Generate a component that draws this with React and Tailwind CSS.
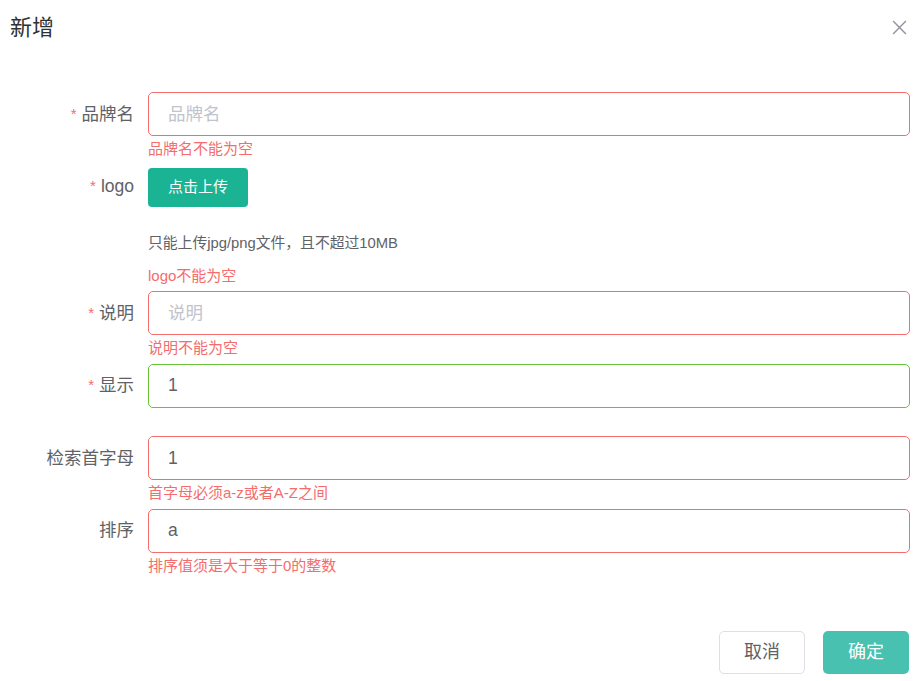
import React from "react";

const FONT = { fontFamily: '"Liberation Sans", "Noto Sans CJK SC", sans-serif' };

function Label({ text, required }) {
  return (
    <div className="w-[148px] shrink-0 pr-[14px] h-[44px] flex items-center justify-end text-[17.5px] text-[#606266]">
      {required && <span className="text-[#f56c6c] mr-[5px] text-[15px]">*</span>}
      <span>{text}</span>
    </div>
  );
}

function Field({ label, required, placeholder, value, error, ok }) {
  return (
    <div className="flex mb-[28.5px]">
      <Label text={label} required={required} />
      <div className="relative flex-1">
        <div
          className={
            "h-[44px] rounded-[5px] border flex items-center pl-[19px] text-[17.5px] " +
            (ok ? "border-[#67c23a]" : "border-[#f56c6c]")
          }
        >
          {value ? (
            <span className="text-[#606266]">{value}</span>
          ) : (
            <span className="text-[#c0c4cc]">{placeholder}</span>
          )}
        </div>
        {error && (
          <div className="absolute left-0 top-[48px] text-[15px] leading-[18px] text-[#f56c6c] whitespace-nowrap">
            {error}
          </div>
        )}
      </div>
    </div>
  );
}

export default function App() {
  return (
    <div className="w-[924px] h-[681px] bg-white relative overflow-hidden" style={FONT}>
      <div className="flex items-center justify-between pl-[10px] pr-[17px] h-[54px]">
        <span className="text-[22px] text-[#303133]">新增</span>
        <svg width="15" height="15" viewBox="0 0 14 14" className="text-[#909399]">
          <path d="M1 1L13 13M13 1L1 13" stroke="currentColor" strokeWidth="1.3" fill="none" />
        </svg>
      </div>
      <div className="pt-[38px] pr-[14px]">
        <Field label="品牌名" required placeholder="品牌名" error="品牌名不能为空" />
        <div className="flex mb-[28.5px]">
          <Label text="logo" required />
          <div className="relative flex-1">
            <div className="h-[98px]">
              <div className="h-[44px] flex items-center">
                <button className="w-[100px] h-[39px] mt-[2px] rounded-[4px] bg-[#1ab394] text-white text-[15px]">
                  点击上传
                </button>
              </div>
              <div className="mt-[24px] h-[20px] leading-[20px] text-[14.8px] text-[#606266] whitespace-nowrap">
                只能上传jpg/png文件，且不超过10MB
              </div>
            </div>
            <div className="absolute left-0 top-[102px] text-[15px] leading-[18px] text-[#f56c6c] whitespace-nowrap">
              logo不能为空
            </div>
          </div>
        </div>
        <Field label="说明" required placeholder="说明" error="说明不能为空" />
        <Field label="显示" required value="1" ok />
        <Field label="检索首字母" value="1" error="首字母必须a-z或者A-Z之间" />
        <Field label="排序" value="a" error="排序值须是大于等于0的整数" />
      </div>
      <div className="absolute right-[15px] bottom-[7px] flex gap-[18px]">
        <button className="w-[86px] h-[43px] rounded-[5px] border border-[#dcdfe6] bg-white text-[18px] text-[#606266]">
          取消
        </button>
        <button className="w-[86px] h-[43px] rounded-[5px] bg-[#48c1b1] text-[18px] text-white">
          确定
        </button>
      </div>
    </div>
  );
}
